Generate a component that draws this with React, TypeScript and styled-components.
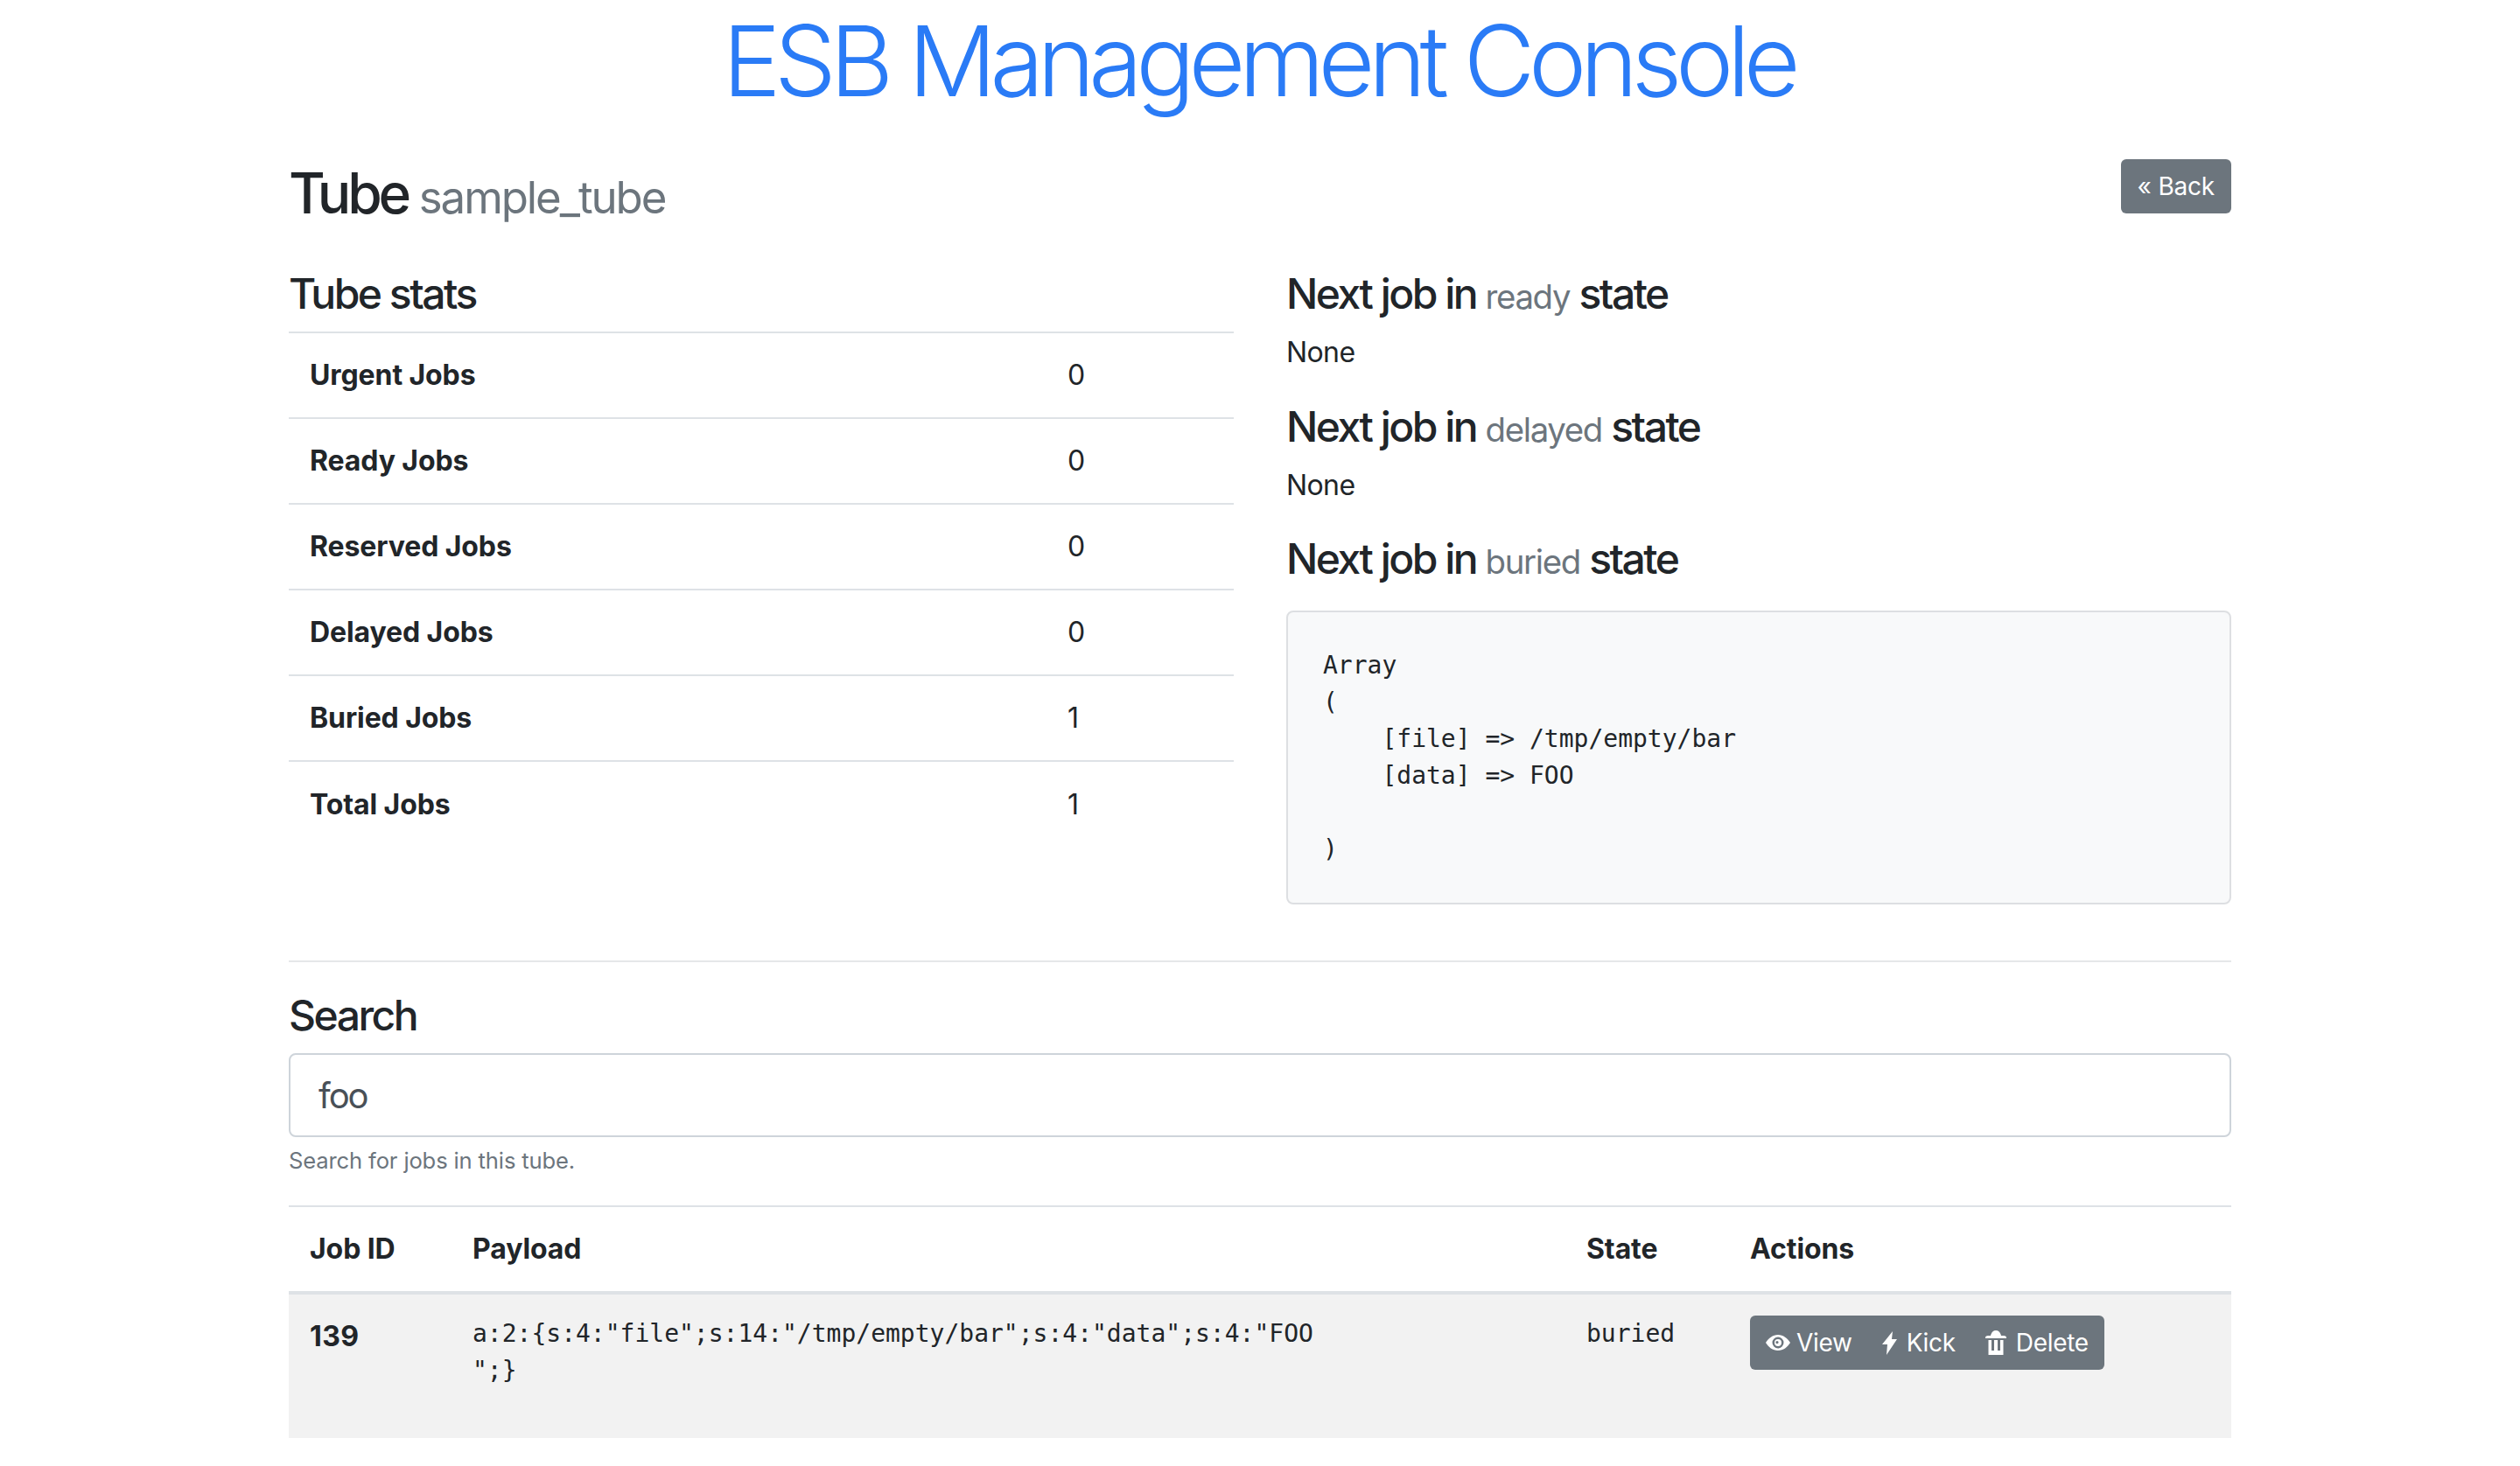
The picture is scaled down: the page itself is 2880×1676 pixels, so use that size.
import styled, { createGlobalStyle } from 'styled-components';

const GlobalStyle = createGlobalStyle`
  * {
    box-sizing: border-box;
  }
  body {
    margin: 0;
    background: #fff;
    color: #212529;
    font-family: Inter, 'Liberation Sans', sans-serif;
    font-size: 32px;
    line-height: 1.5;
    letter-spacing: -0.6px;
  }
`;

const Page = styled.div`
  width: 2280px;
  margin: 0 auto;
  padding: 0 30px;
`;

const Title = styled.h1`
  margin: 2px 0 46px;
  padding-right: 4px;
  color: #2a7bf6;
  font-size: 112px;
  font-weight: 300;
  line-height: 134px;
  text-align: center;
  letter-spacing: -7.35px;
`;

const TubeHeader = styled.div`
  display: flex;
  justify-content: space-between;
  align-items: flex-start;
  margin-bottom: 43px;
`;

const TubeTitle = styled.h2`
  margin: 0;
  font-size: 64px;
  font-weight: 500;
  line-height: 77px;
  letter-spacing: -4.2px;

  small {
    color: #6c757d;
    font-size: 51px;
    font-weight: 400;
    letter-spacing: -2.1px;
  }
`;

const Button = styled.a`
  display: inline-flex;
  align-items: center;
  height: 62px;
  padding: 0 19px;
  background: #6c757d;
  border-radius: 6px;
  color: #fff;
  font-size: 28px;
  letter-spacing: -0.2px;
`;

const Columns = styled.div`
  display: grid;
  grid-template-columns: 1fr 1fr;
  gap: 60px;
`;

const SectionHeading = styled.h4`
  margin: 0 0 14px;
  font-size: 48px;
  font-weight: 500;
  line-height: 58px;
  letter-spacing: -2.5px;

  small {
    color: #6c757d;
    font-size: 38.4px;
    font-weight: 400;
    line-height: 1;
    letter-spacing: -1.35px;
  }
`;

const StatsTable = styled.table`
  width: 100%;
  margin-top: 1px;
  border-collapse: collapse;

  th,
  td {
    height: 98px;
    padding: 24px;
    border-top: 2px solid #dee2e6;
    text-align: left;
  }

  th {
    width: 866px;
    font-weight: 700;
    letter-spacing: -0.1px;
  }
`;

const NoneText = styled.p`
  margin: 0 0 31.5px;
`;

const DumpBox = styled.pre`
  margin: 30px 0 0;
  height: 336px;
  padding: 40px 40px;
  background: #f8f9fa;
  border: 2px solid #dddfe2;
  border-radius: 8px;
  font-family: 'DejaVu Sans Mono', monospace;
  font-size: 28px;
  line-height: 42px;
  letter-spacing: 0;
`;

const Rule = styled.hr`
  margin: 64px 0 0;
  border: 0;
  border-top: 2px solid #e5e7e9;
`;

const SearchSection = styled.section`
  padding-top: 32px;
`;

const SearchInput = styled.input`
  display: block;
  width: 100%;
  height: 96px;
  padding: 0 32px;
  background: #fff;
  border: 2px solid #ced4da;
  border-radius: 8px;
  color: #495057;
  font-family: inherit;
  font-size: 40px;
  letter-spacing: -2px;
`;

const HelpText = styled.small`
  display: block;
  margin: 8px 0 32px;
  color: #6c757d;
  font-size: 25.6px;
  letter-spacing: -0.15px;
`;

const JobsTable = styled.table`
  width: 100%;
  border-collapse: collapse;
  table-layout: fixed;

  thead th {
    height: 98px;
    padding: 24px;
    border-top: 2px solid #dee2e6;
    border-bottom: 4px solid #dee2e6;
    text-align: left;
    vertical-align: bottom;
    font-weight: 700;
    letter-spacing: -0.1px;
  }

  tbody tr {
    background: #f2f2f2;
  }

  tbody th,
  tbody td {
    padding: 24px;
    text-align: left;
    vertical-align: top;
    letter-spacing: 0.4px;
  }
`;

const Code = styled.pre`
  margin: 0 0 32px;
  font-family: 'DejaVu Sans Mono', monospace;
  font-size: 28px;
  line-height: 42px;
  letter-spacing: 0;
`;

const ActionGroup = styled.div`
  display: inline-flex;
  height: 62px;
  background: #6c757d;
  border-radius: 6px;
  overflow: hidden;
`;

const ActionButton = styled.a`
  display: inline-flex;
  align-items: center;
  gap: 11px;
  padding: 0 17px;
  color: #fff;
  font-size: 28px;
  letter-spacing: -0.3px;

  &:last-child {
    padding-right: 18px;
  }

  svg {
    display: block;
    fill: currentColor;
  }
`;

const EyeSvg = styled.svg`
  margin: 0 -4px 0 1px;
`;

const payload = 'a:2:{s:4:"file";s:14:"/tmp/empty/bar";s:4:"data";s:4:"FOO\n";}';

const stats: [string, number][] = [
  ['Urgent Jobs', 0],
  ['Ready Jobs', 0],
  ['Reserved Jobs', 0],
  ['Delayed Jobs', 0],
  ['Buried Jobs', 1],
  ['Total Jobs', 1],
];

function EyeIcon() {
  return (
    <EyeSvg width="28" height="18" viewBox="0 0 28 18">
      <path
        fillRule="evenodd"
        d="M14 0C8 0 3 4 0 9c3 5 8 9 14 9s11-4 14-9c-3-5-8-9-14-9zm0 2.500a6.500 6.500 0 1 1 0 13 6.500 6.500 0 0 1 0-13z"
      />
      <path
        fillRule="evenodd"
        d="M14 5a4 4 0 1 0 0 8 4 4 0 0 0 0-8zm-1 2a1.600 1.600 0 1 1 0 3.200 1.600 1.600 0 0 1 0-3.200z"
      />
    </EyeSvg>
  );
}

function BoltIcon() {
  return (
    <svg width="17" height="27" viewBox="0 0 17 27">
      <path d="M12 0 0 15h6l-1 12L17 9h-6z" />
    </svg>
  );
}

function TrashIcon() {
  return (
    <svg width="24" height="28" viewBox="0 0 24 28">
      <path d="M0 8c0-1 1-2 3-2h3c1-4 3-6 6-6s5 2 6 6h3c2 0 3 1 3 2v1H0z" />
      <path d="M3.500 11H7v12h3V11h4v12h3V11h3.500v17h-17z" />
    </svg>
  );
}

export default function App() {
  return (
    <>
      <GlobalStyle />
      <Page>
        <Title>ESB Management Console</Title>
        <TubeHeader>
          <TubeTitle>
            Tube <small>sample_tube</small>
          </TubeTitle>
          <Button>« Back</Button>
        </TubeHeader>
        <Columns>
          <div>
            <SectionHeading>Tube stats</SectionHeading>
            <StatsTable>
              <tbody>
                {stats.map(([label, value]) => (
                  <tr key={label}>
                    <th>{label}</th>
                    <td>{value}</td>
                  </tr>
                ))}
              </tbody>
            </StatsTable>
          </div>
          <div>
            <SectionHeading>
              Next job in <small>ready</small> state
            </SectionHeading>
            <NoneText>None</NoneText>
            <SectionHeading>
              Next job in <small>delayed</small> state
            </SectionHeading>
            <NoneText>None</NoneText>
            <SectionHeading>
              Next job in <small>buried</small> state
            </SectionHeading>
            <DumpBox>{`Array
(
    [file] => /tmp/empty/bar
    [data] => FOO

)`}</DumpBox>
          </div>
        </Columns>
        <Rule />
        <SearchSection>
          <SectionHeading>Search</SectionHeading>
          <SearchInput defaultValue="foo" />
          <HelpText>Search for jobs in this tube.</HelpText>
        </SearchSection>
        <JobsTable>
          <colgroup>
            <col width="186" />
            <col width="1273" />
            <col width="187" />
            <col />
          </colgroup>
          <thead>
            <tr>
              <th>Job ID</th>
              <th>Payload</th>
              <th>State</th>
              <th>Actions</th>
            </tr>
          </thead>
          <tbody>
            <tr>
              <th>139</th>
              <td>
                <Code>{payload}</Code>
              </td>
              <td>
                <Code>buried</Code>
              </td>
              <td>
                <ActionGroup>
                  <ActionButton>
                    <EyeIcon /> View
                  </ActionButton>
                  <ActionButton>
                    <BoltIcon /> Kick
                  </ActionButton>
                  <ActionButton>
                    <TrashIcon /> Delete
                  </ActionButton>
                </ActionGroup>
              </td>
            </tr>
          </tbody>
        </JobsTable>
      </Page>
    </>
  );
}
